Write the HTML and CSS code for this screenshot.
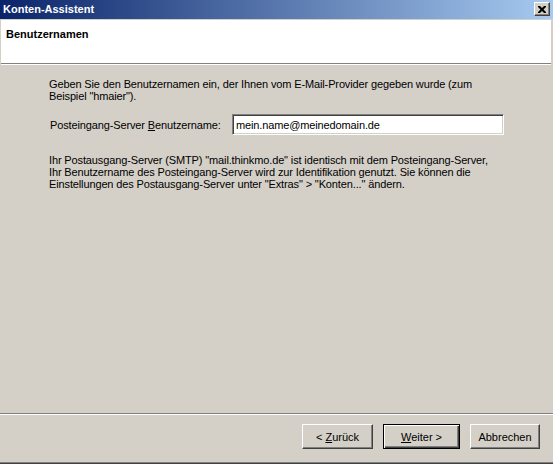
FILE: index.html
```html
<!DOCTYPE html>
<html lang="de">
<head>
  <meta charset="UTF-8">
  <title>Konten-Assistent</title>
  <link rel="stylesheet" href="styles.css">
</head>
<body>
  <div class="window">
    <div class="titlebar">
      <span class="title">Konten-Assistent</span>
      <button class="close" title="Schließen">
        <svg width="8" height="7" viewBox="0 0 8 7">
          <path d="M0 0h2l2 2 2-2h2v1L5.5 3.5 8 6v1H6L4 5 2 7H0V6l2.5-2.5L0 1z" fill="#000"/>
        </svg>
      </button>
    </div>

    <div class="header">
      <h1>Benutzernamen</h1>
    </div>

    <div class="content">
      <p>
        Geben Sie den Benutzernamen ein, der Ihnen vom E-Mail-Provider gegeben wurde (zum<br>
        Beispiel "hmaier").
      </p>

      <div class="field">
        <label for="username">Posteingang-Server <u>B</u>enutzername:</label>
        <input id="username" type="text" value="mein.name@meinedomain.de">
      </div>

      <p class="note">
        Ihr Postausgang-Server (SMTP) "mail.thinkmo.de" ist identisch mit dem Posteingang-Server,<br>
        Ihr Benutzername des Posteingang-Server wird zur Identifikation genutzt. Sie können die<br>
        Einstellungen des Postausgang-Server unter "Extras" &gt; "Konten..." ändern.
      </p>
    </div>

    <div class="footer">
      <button class="btn btn-back">&lt; <u>Z</u>urück</button>
      <button class="btn btn-default"><u>W</u>eiter &gt;</button>
      <button class="btn btn-cancel">Abbrechen</button>
    </div>
  </div>
</body>
</html>
```

FILE: styles.css
```css
* {
  margin: 0;
  padding: 0;
  box-sizing: border-box;
}

body {
  font-family: 'Liberation Sans', Arial, sans-serif;
  font-size: 11px;
  line-height: 12px;
  color: #000;
  background: #d4d0c8;
}

.window {
  width: 553px;
  height: 464px;
  display: flex;
  flex-direction: column;
  background: #d4d0c8;
  border-bottom: 1px solid #404040;
}

/* caption bar */
.titlebar {
  height: 20px;
  display: flex;
  align-items: center;
  justify-content: space-between;
  padding: 0 3px 1px 3px;
  background: linear-gradient(to right, #0a246a, #a6caf0);
  border-bottom: 1px solid #d4d0c8;
  flex-shrink: 0;
}

.title {
  color: #fff;
  font-weight: bold;
  font-size: 11px;
}

.close {
  width: 16px;
  height: 14px;
  display: flex;
  align-items: center;
  justify-content: center;
  background: #d4d0c8;
  border: 1px solid;
  border-color: #fff #404040 #404040 #fff;
  box-shadow: inset -1px -1px #808080;
}

/* white page heading */
.header {
  height: 44px;
  margin: 0 2px 0 1px;
  padding: 8px 5px 0;
  background: #fff;
  border-bottom: 1px solid #808080;
  box-shadow: 0 1px #fff;
  flex-shrink: 0;
}

.header h1 {
  font-size: 11px;
  font-weight: bold;
  line-height: 13px;
}

.content {
  flex: 1;
  padding: 14px 0 0 49px;
  letter-spacing: -0.13px;
}

.field {
  display: flex;
  align-items: center;
  margin: 12px 0 19px 1px;
}

.field label {
  width: 182px;
}

.field input {
  width: 272px;
  height: 21px;
  padding: 0 3px;
  font: inherit;
  letter-spacing: inherit;
  color: #000;
  background: #fff;
  border: 1px solid;
  border-color: #808080 #fff #fff #808080;
  box-shadow: inset 1px 1px #404040, inset -1px -1px #d4d0c8;
  outline: none;
}

/* button row */
.footer {
  height: 50px;
  display: flex;
  justify-content: flex-end;
  gap: 10px;
  padding: 10px 13px 0 0;
  border-top: 1px solid #808080;
  box-shadow: inset 0 1px #fff;
  border-bottom: 1px solid #808080;
  flex-shrink: 0;
}

.btn {
  height: 25px;
  font: inherit;
  color: #000;
  background: #d4d0c8;
  border: 1px solid;
  border-color: #fff #404040 #404040 #fff;
  box-shadow: inset -1px -1px #808080;
}

.btn-back {
  width: 71px;
}

.btn-default {
  width: 77px;
  border-color: #000;
  box-shadow: inset 1px 1px #fff, inset -1px -1px #404040, inset -2px -2px #808080;
}

.btn-cancel {
  width: 70px;
}
```
